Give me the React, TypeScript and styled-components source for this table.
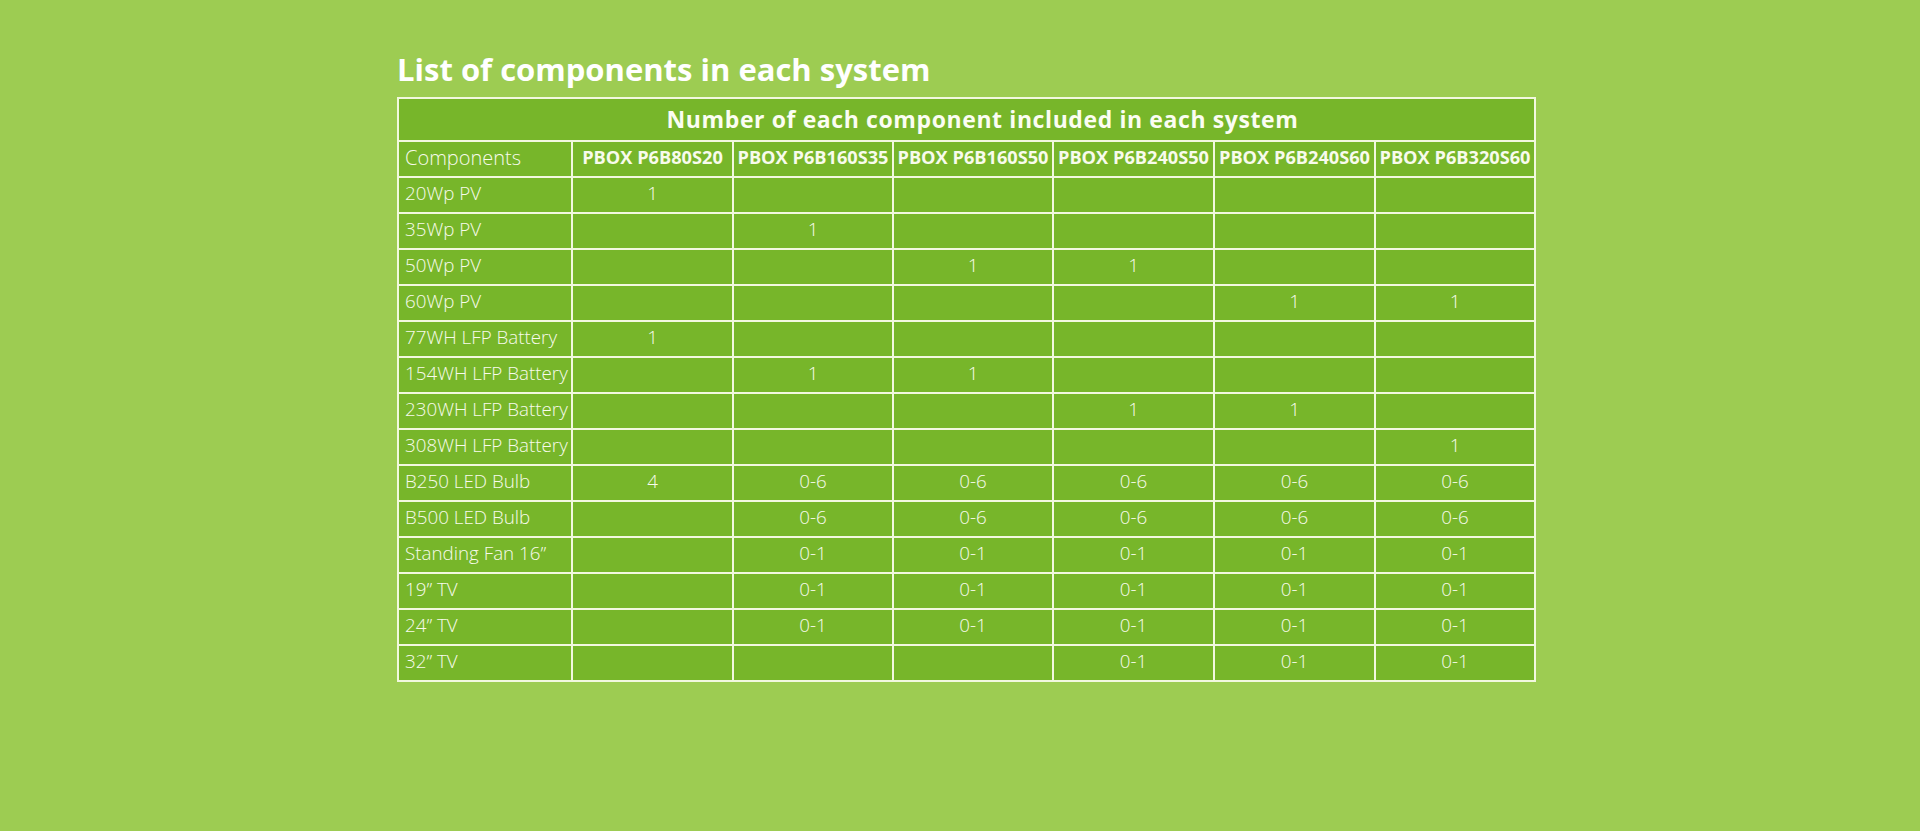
import React from "react";
import styled, { createGlobalStyle } from "styled-components";

const GlobalStyle = createGlobalStyle`
  html, body {
    margin: 0;
    padding: 0;
    background: #9dcc52;
  }
  body {
    font-family: "Open Sans", "Liberation Sans", sans-serif;
    color: #fbfdf2;
  }
`;

const Page = styled.div`
  min-height: 831px;
  background: #9dcc52;
  padding: 48px 0 0 397px;
  box-sizing: border-box;
`;

const Title = styled.h2`
  margin: 0 0 7px 0;
  font-size: 31px;
  font-weight: 700;
  line-height: normal;
  color: #ffffff;
`;

const Table = styled.table`
  width: 1137px;
  border-collapse: collapse;
  table-layout: fixed;
  background: #77b62a;
`;

const Col = styled.col<{ $w: number }>`
  width: ${(p) => p.$w}px;
`;

const Cell = styled.td<{ $align?: "left" | "center"; $bold?: boolean; $size?: number }>`
  border: 2px solid #f2f8df;
  padding: ${(p) => (p.$align === "left" ? "0 0 3px 6px" : p.$bold ? "0 3px 3px" : "0 6px 3px")};
  height: 31px;
  line-height: 1.2;
  text-align: ${(p) => p.$align ?? "center"};
  font-weight: ${(p) => (p.$bold ? 700 : 300)};
  font-size: ${(p) => p.$size ?? 18.8}px;
  color: #f8fbec;
  white-space: nowrap;
  vertical-align: middle;
`;

const CaptionCell = styled.th`
  border: 2px solid #f2f8df;
  height: 40px;
  padding: 0 0 1px 32px;
  text-align: center;
  font-size: 23px;
  font-weight: 700;
  letter-spacing: 0.6px;
  color: #fbfdf2;
  vertical-align: middle;
`;

const colWidths = [174, 161, 160, 160, 161, 161, 160];

const models = [
  "PBOX P6B80S20",
  "PBOX P6B160S35",
  "PBOX P6B160S50",
  "PBOX P6B240S50",
  "PBOX P6B240S60",
  "PBOX P6B320S60",
];

const rows: [string, string[]][] = [
  ["20Wp PV", ["1", "", "", "", "", ""]],
  ["35Wp PV", ["", "1", "", "", "", ""]],
  ["50Wp PV", ["", "", "1", "1", "", ""]],
  ["60Wp PV", ["", "", "", "", "1", "1"]],
  ["77WH LFP Battery", ["1", "", "", "", "", ""]],
  ["154WH LFP Battery", ["", "1", "1", "", "", ""]],
  ["230WH LFP Battery", ["", "", "", "1", "1", ""]],
  ["308WH LFP Battery", ["", "", "", "", "", "1"]],
  ["B250 LED Bulb", ["4", "0-6", "0-6", "0-6", "0-6", "0-6"]],
  ["B500 LED Bulb", ["", "0-6", "0-6", "0-6", "0-6", "0-6"]],
  ["Standing Fan 16\u201D", ["", "0-1", "0-1", "0-1", "0-1", "0-1"]],
  ["19\u201D TV", ["", "0-1", "0-1", "0-1", "0-1", "0-1"]],
  ["24\u201D TV", ["", "0-1", "0-1", "0-1", "0-1", "0-1"]],
  ["32\u201D TV", ["", "", "", "0-1", "0-1", "0-1"]],
];

export default function App() {
  return (
    <>
      <GlobalStyle />
      <Page>
        <Title>List of components in each system</Title>
        <Table>
          <colgroup>
            {colWidths.map((w, i) => (
              <Col key={i} $w={w} />
            ))}
          </colgroup>
          <thead>
            <tr>
              <CaptionCell colSpan={7}>Number of each component included in each system</CaptionCell>
            </tr>
            <tr>
              <Cell $align="left" $size={20}>Components</Cell>
              {models.map((m) => (
                <Cell key={m} $bold $size={18.2}>
                  {m}
                </Cell>
              ))}
            </tr>
          </thead>
          <tbody>
            {rows.map(([name, vals]) => (
              <tr key={name}>
                <Cell $align="left">{name}</Cell>
                {vals.map((v, i) => (
                  <Cell key={i}>{v}</Cell>
                ))}
              </tr>
            ))}
          </tbody>
        </Table>
      </Page>
    </>
  );
}
